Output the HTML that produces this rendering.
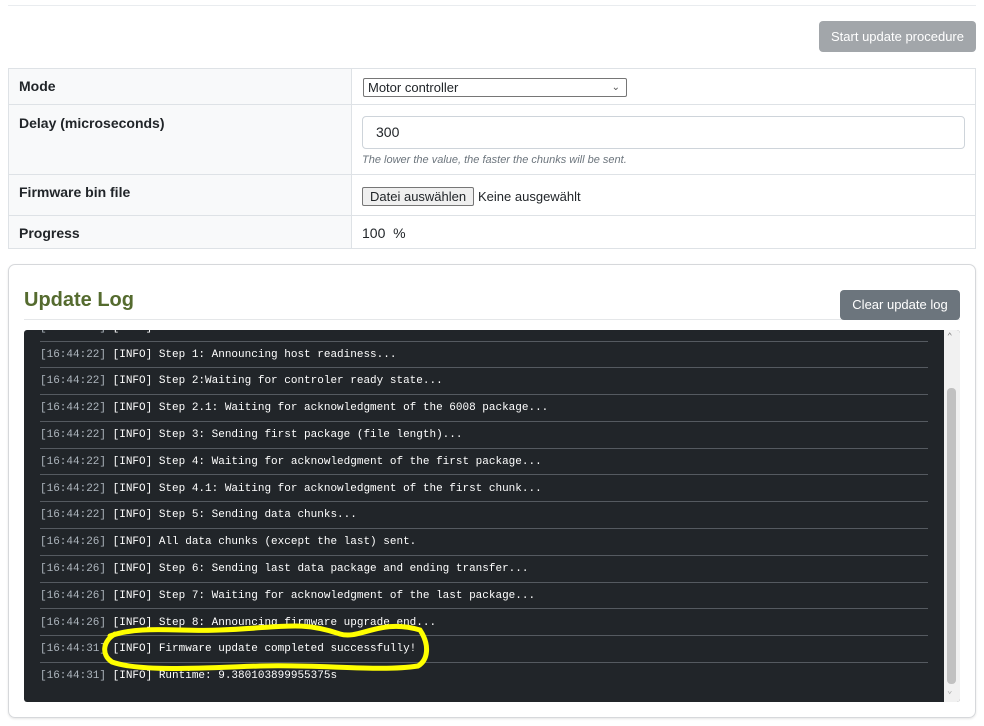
<!DOCTYPE html><html><head><style>
body{margin:0;background:#fff;font-family:"Liberation Sans",sans-serif;font-size:14px;color:#212529;width:984px;height:726px;overflow:hidden;position:relative}
.abs{position:absolute}
table{position:absolute;left:8px;top:68px;width:968px;border-collapse:collapse}
td{border:1px solid #dee2e6;padding:0 10px;vertical-align:top}
td.l{background:#f8f9fa;font-weight:bold;width:324px}
.log{position:absolute;left:24px;top:330px;width:936px;height:372px;background:#212529;border-radius:3px;overflow:hidden;font-family:"Liberation Mono",monospace;font-size:11px;color:#fff}
.row{position:absolute;left:16px;width:888px;height:26.8px;border-bottom:1px solid #555a60;line-height:28px}
.t{color:#adb5bd}
</style></head><body>
<div class="abs" style="left:8px;top:5px;width:968px;height:1px;background:#e9ecef"></div>
<div class="abs" style="left:819px;top:21px;width:157px;height:31px;background:#a2a6aa;border-radius:4px;color:#fff;font-size:13px;line-height:31px;text-align:center">Start update procedure</div>
<table>
<tr style="height:36px"><td class="l" style="padding-top:9px">Mode</td><td style="padding-top:9px"><div style="width:258px;height:17px;border:1px solid #767676;border-radius:2px;font-size:13px;line-height:17px;padding-left:4px;position:relative;margin-left:1px">Motor controller<span style="position:absolute;right:6px;top:0;font-size:10px;color:#555">&#8964;</span></div></td></tr>
<tr style="height:70px"><td class="l" style="padding-top:10px">Delay (microseconds)</td><td style="padding-top:11px"><div style="width:588px;height:31px;border:1px solid #ced4da;border-radius:4px;line-height:31px;padding-left:13px">300</div><div style="font-size:11px;font-style:italic;color:#6c757d;margin-top:5px">The lower the value, the faster the chunks will be sent.</div></td></tr>
<tr style="height:41px"><td class="l" style="padding-top:9px">Firmware bin file</td><td style="padding-top:12px"><span style="display:inline-block;border:1px solid #767676;background:#efefef;padding:1px 7px;font-size:13px;border-radius:2px">Datei auswählen</span> <span style="font-size:13px">Keine ausgewählt</span></td></tr>
<tr style="height:33px"><td class="l" style="padding-top:9px">Progress</td><td style="padding-top:9px">100&nbsp; %</td></tr>
</table>
<div class="abs" style="left:8px;top:264px;width:966px;height:452px;border:1px solid #d6d8db;border-radius:7px;box-shadow:0 1px 2px rgba(0,0,0,.1)"></div>
<div class="abs" style="left:24px;top:289px;font-size:20px;font-weight:bold;color:#556b2f">Update Log</div>
<div class="abs" style="left:24px;top:319px;width:936px;height:1px;background:#e5e7e9"></div>
<div class="abs" style="left:840px;top:290px;width:120px;height:30px;background:#6c757d;border-radius:4px;color:#fff;font-size:13px;line-height:30px;text-align:center">Clear update log</div>
<div class="log">
<div class="row" style="top:-16px"><span class="t">[16:44:22]</span> [INFO] File header data: 72 42 01 00 40 00 00 00 00 00 00 00 00 00</div>
<div class="row" style="top:10.5px"><span class="t">[16:44:22]</span> [INFO] Step 1: Announcing host readiness...</div>
<div class="row" style="top:37.3px"><span class="t">[16:44:22]</span> [INFO] Step 2:Waiting for controler ready state...</div>
<div class="row" style="top:64.1px"><span class="t">[16:44:22]</span> [INFO] Step 2.1: Waiting for acknowledgment of the 6008 package...</div>
<div class="row" style="top:90.9px"><span class="t">[16:44:22]</span> [INFO] Step 3: Sending first package (file length)...</div>
<div class="row" style="top:117.7px"><span class="t">[16:44:22]</span> [INFO] Step 4: Waiting for acknowledgment of the first package...</div>
<div class="row" style="top:144.5px"><span class="t">[16:44:22]</span> [INFO] Step 4.1: Waiting for acknowledgment of the first chunk...</div>
<div class="row" style="top:171.3px"><span class="t">[16:44:22]</span> [INFO] Step 5: Sending data chunks...</div>
<div class="row" style="top:198.1px"><span class="t">[16:44:26]</span> [INFO] All data chunks (except the last) sent.</div>
<div class="row" style="top:224.9px"><span class="t">[16:44:26]</span> [INFO] Step 6: Sending last data package and ending transfer...</div>
<div class="row" style="top:251.7px"><span class="t">[16:44:26]</span> [INFO] Step 7: Waiting for acknowledgment of the last package...</div>
<div class="row" style="top:278.5px"><span class="t">[16:44:26]</span> [INFO] Step 8: Announcing firmware upgrade end...</div>
<div class="row" style="top:305.3px"><span class="t">[16:44:31]</span> [INFO] Firmware update completed successfully!</div>
<div class="row" style="top:332.1px;border:none"><span class="t">[16:44:31]</span> [INFO] Runtime: 9.380103899955375s</div>
<div class="abs" style="left:920px;top:0;width:16px;height:372px;background:#f1f1f1"></div>
<div class="abs" style="left:923px;top:58px;width:9px;height:296px;background:#c1c1c1;border-radius:4px"></div>
<div class="abs" style="left:923px;top:2px;color:#777;font-size:9px">&#8963;</div>
<div class="abs" style="left:923px;top:356px;color:#aaa;font-size:9px">&#8964;</div>
</div>
<svg class="abs" style="left:0;top:0" width="984" height="726"><path d="M110 636 C140 625,180 632,220 630 C280 628,300 620,340 634 C360 640,380 618,420 630 C430 645,428 660,418 666 C380 672,320 664,260 666 C200 668,140 672,112 662 C100 654,104 640,115 634" fill="none" stroke="#ffff00" stroke-width="5" stroke-linecap="round"/></svg>
</body></html>
